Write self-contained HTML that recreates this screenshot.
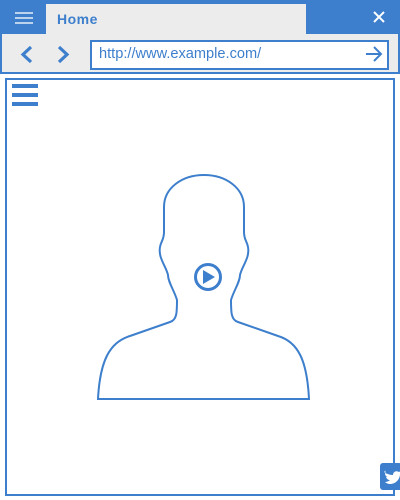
<!DOCTYPE html>
<html><head><style>
body{margin:0;width:400px;height:500px;background:#fff;position:relative;overflow:hidden;font-family:"Liberation Sans",sans-serif}
.a{position:absolute}
</style></head><body>
<div class="a" style="left:0;top:0;width:400px;height:34px;background:#3d7fcc"></div>
<div class="a" style="left:0;top:34px;width:396px;height:38px;background:#ececec;border:2px solid #3d7fcc;border-top:none"></div>
<div class="a" style="left:46px;top:4px;width:260px;height:30px;background:#ececec"></div>
<div class="a" style="left:15px;top:12px;width:18px;height:2px;background:#bcd3ee"></div>
<div class="a" style="left:15px;top:17px;width:18px;height:2px;background:#bcd3ee"></div>
<div class="a" style="left:15px;top:22px;width:18px;height:2px;background:#bcd3ee"></div>
<div class="a" style="left:57px;top:11px;font-size:14px;font-weight:bold;color:#3d7fcc;letter-spacing:0.5px">Home</div>
<svg class="a" style="left:372px;top:10px" width="14" height="14"><path d="M2 2L12 12M12 2L2 12" stroke="#fff" stroke-width="2"/></svg>
<svg class="a" style="left:18px;top:42px" width="60" height="26"><path d="M13 5L5 12.5L13 20" stroke="#3d7fcc" stroke-width="3.2" fill="none"/><path d="M41 5L49 12.5L41 20" stroke="#3d7fcc" stroke-width="3.2" fill="none"/></svg>
<div class="a" style="left:90px;top:40px;width:295px;height:26px;background:#fff;border:2px solid #3d7fcc"></div>
<div class="a" style="left:99px;top:46px;font-size:14.6px;color:#3d7fcc">http://www.example.com/</div>
<svg class="a" style="left:364px;top:45px" width="20" height="18"><path d="M2 9H17M10 2L17 9L10 16" stroke="#3d7fcc" stroke-width="2" fill="none"/></svg>
<div class="a" style="left:5px;top:78px;width:386px;height:414px;border:2px solid #3d7fcc"></div>
<div class="a" style="left:12px;top:84px;width:26px;height:4px;background:#3d7fcc"></div>
<div class="a" style="left:12px;top:93px;width:26px;height:4px;background:#3d7fcc"></div>
<div class="a" style="left:12px;top:102px;width:26px;height:4px;background:#3d7fcc"></div>
<svg class="a" style="left:0;top:0" width="400" height="500">
<path d="M98 399 C100 360 110 342 130 336 L170 322 C177 320 177 312 177 300 C174 290 168 282 168 275 C166 266 158 258 160 247 C161 241 164 240 164 232 L164 207 C164 188 182 175 204 175 C226 175 244 188 244 207 L244 232 C244 240 247 241 248 247 C250 258 242 266 240 275 C240 282 234 290 231 300 C231 312 231 320 238 322 L278 336 C298 342 307 360 309 399 Z" fill="none" stroke="#3d7fcc" stroke-width="2"/>
<circle cx="208" cy="277" r="12.5" fill="none" stroke="#3d7fcc" stroke-width="3"/>
<path d="M203 270L215 277L203 284Z" fill="#3d7fcc"/>
<rect x="380" y="463" width="22" height="27" rx="3" fill="#3d7fcc"/>
<path d="M384 472c3 2 6 3 9 3 0-3 3-5 6-3l2-1-1 2v1c0 5-4 10-10 10-2 0-4-1-5-2 2 0 4-1 5-2-2 0-3-1-4-3h2c-2 0-3-2-3-4l2 1c-2-1-2-3-1-4z" fill="#fff"/>
</svg>
</body></html>
